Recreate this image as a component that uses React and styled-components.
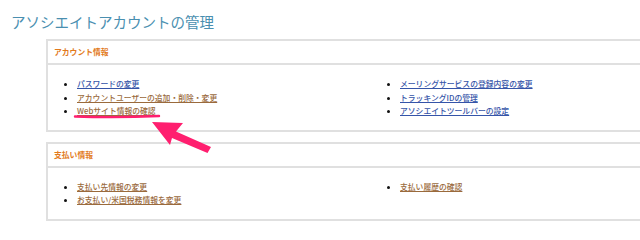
import React from "react";
import styled, { createGlobalStyle } from "styled-components";

const GlobalStyle = createGlobalStyle`
  body {
    margin: 0;
    background: #fff;
    font-family: "Noto Sans CJK JP", "Liberation Sans", sans-serif;
  }
`;

const sections = [
  {
    title: "アカウント情報",
    left: [
      { label: "パスワードの変更", fresh: true },
      { label: "アカウントユーザーの追加・削除・変更" },
      { label: "Webサイト情報の確認" },
    ],
    right: [
      { label: "メーリングサービスの登録内容の変更", fresh: true },
      { label: "トラッキングIDの管理", fresh: true },
      { label: "アソシエイトツールバーの設定", fresh: true },
    ],
  },
  {
    title: "支払い情報",
    left: [
      { label: "支払い先情報の変更" },
      { label: "お支払い/米国税務情報を変更" },
    ],
    right: [{ label: "支払い履歴の確認" }],
  },
];

function LinkList({ items }) {
  return (
    <List>
      {items.map((item) => (
        <li key={item.label}>
          <ItemLink href="#" $fresh={item.fresh}>
            {item.label}
          </ItemLink>
        </li>
      ))}
    </List>
  );
}

export default function App() {
  return (
    <Page>
      <GlobalStyle />
      <Title>アソシエイトアカウントの管理</Title>

      {sections.map((sec) => (
        <Box key={sec.title}>
          <BoxHeader>{sec.title}</BoxHeader>
          <BoxBody>
            <LinkList items={sec.left} />
            <LinkList items={sec.right} />
          </BoxBody>
        </Box>
      ))}

      {/* annotation drawn on top of the page */}
      <Annotation viewBox="0 0 640 239" width="640" height="239">
        <path
          d="M75 116.5 Q117 118 159 116"
          stroke="#ff1f6f"
          strokeWidth="2.4"
          fill="none"
          strokeLinecap="round"
        />
        <polygon
          points="152,122 183,123 176,131.5 211,147 207.5,153 172,138 170,145"
          fill="#ff1f6f"
        />
      </Annotation>
    </Page>
  );
}

const Page = styled.div`
  position: relative;
  width: 640px;
  height: 239px;
  overflow: hidden;
  padding-top: 12px;
  box-sizing: border-box;
`;

const Title = styled.h1`
  margin: 0 0 7px 11px;
  font-size: 14.5px;
  line-height: 20px;
  font-weight: normal;
  color: #4a8fb0;
`;

const Box = styled.section`
  margin: 0 0 10px 46px;
  width: 594px;
  border: 2px solid #e0e0e0;
  border-right: none;
  box-sizing: border-box;
`;

const BoxHeader = styled.div`
  height: 22px;
  line-height: 22px;
  padding-left: 6px;
  font-size: 7.8px;
  font-weight: bold;
  color: #e27a1c;
  border-bottom: 2px solid #e0e0e0;
`;

const BoxBody = styled.div`
  display: grid;
  grid-template-columns: 323px 1fr;
  padding: 12px 0 12px 29px;
`;

const List = styled.ul`
  margin: 0;
  padding: 0;
  list-style: disc;
  font-size: 7.8px;
  line-height: 13.5px;

  li::marker {
    color: #111;
    font-size: 9px;
  }
`;

const ItemLink = styled.a`
  color: ${(p) => (p.$fresh ? "#3554a8" : "#9a6a3c")};
  text-decoration: underline;
  font-weight: 500;
`;

const Annotation = styled.svg`
  position: absolute;
  left: 0;
  top: 0;
  pointer-events: none;
`;
